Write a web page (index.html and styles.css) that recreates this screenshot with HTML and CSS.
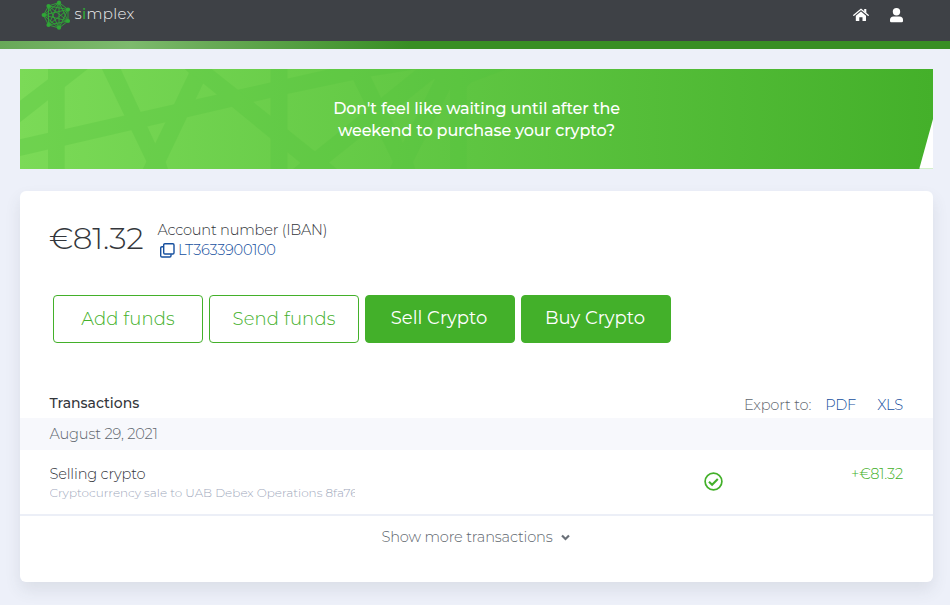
FILE: index.html
```html
<!DOCTYPE html>
<html lang="en">
<head>
  <meta charset="UTF-8">
  <title>Simplex</title>
  <meta name="viewport" content="width=device-width, initial-scale=1.0">
  <link rel="stylesheet" href="styles.css">
</head>
<body>
  <header class="header">
    <a class="logo" href="#">
      <svg class="logo-mark" width="30" height="31" viewBox="0 0 30 31">
        <g fill="none" stroke="#2fa836" stroke-width=".9">
          <path d="M18 2.500L27 9.500L27 21L18 28L7.500 25L2.500 15L7.500 6Z"/>
          <path d="M18 2.500L27 21L7.500 25L7.500 6L27 9.500L18 28L2.500 15Z"/>
          <path d="M18 2.500L18 28L7.500 6L27 21L2.500 15L27 9.500L7.500 25Z"/>
        </g>
        <g fill="#2fa836">
          <circle cx="18" cy="2.700" r="2.100"/><circle cx="27" cy="9.500" r="2.100"/><circle cx="27" cy="21" r="2.100"/>
          <circle cx="18" cy="27.700" r="2.100"/><circle cx="7.500" cy="25" r="2.100"/><circle cx="2.700" cy="15" r="2.100"/><circle cx="7.500" cy="6" r="2.100"/>
        </g>
      </svg>
      <span class="logo-text">s<span class="logo-i">i</span>mplex</span>
    </a>
    <nav class="nav">
      <a href="#" aria-label="Home">
        <svg width="16" height="14" viewBox="0 0 16 14" fill="#fff">
          <path d="M8 3.400L2.800 7.700V12.400Q2.800 13 3.400 13H6.300V9.300H9.500V13H12.400Q13 13 13 12.400V7.700Z"/>
          <path d="M.8 7.300L8 1.300L15.200 7.300" fill="none" stroke="#fff" stroke-width="1.300" stroke-linecap="round"/>
          <path d="M11.200 1H13.300V5.300L11.200 3.500Z"/>
        </svg>
      </a>
      <a href="#" aria-label="Profile">
        <svg width="13" height="15" viewBox="0 0 13 15" fill="#fff">
          <circle cx="6.500" cy="3.800" r="3.700"/>
          <path d="M3.500 8.500H9.500Q13 8.800 13 12V13Q13 14.300 11.700 14.300H1.300Q0 14.300 0 13V12Q0 8.800 3.500 8.500Z"/>
        </svg>
      </a>
    </nav>
  </header>
  <div class="stripe"></div>

  <main class="page">
    <section class="banner">
      <svg class="banner-art" width="913" height="100" viewBox="0 0 913 100">
        <g class="weave">
          <path d="M28 0H44.700V100H28Z"/>
          <path d="M0 31.700L41.500 0H67.700L0 53.300Z"/>
          <path d="M0 70.300L310 0H397L350 7.500L267 25L0 87Z"/>
          <path d="M82 0H100.700L147 100H123L126.700 93Z"/>
          <path d="M165 0H190L145.700 93L148 100H123L169 4Z"/>
          <path d="M165 0H191.700L317 100H288L182.700 14Z"/>
          <path d="M250.500 0H267.500V100H250.500Z"/>
          <path d="M273 100L397 0H426L301 100Z"/>
          <path d="M328 0H347L392 93L395 100H370L373 93Z"/>
          <path d="M420 0H440L393 93L395 100H370Z"/>
          <path d="M430 0H446.700V100H430Z"/>
          <path d="M397 0H487L452 13L446 18L440 24Z"/>
        </g>
        <path d="M913 50V99H899.500Z" fill="#fff"/>
        <path d="M899.500 99H913V100H899.500Z" fill="#d3f0cb"/>
      </svg>
      <p class="banner-text">Don't feel like waiting until after the<br>weekend to purchase your crypto?</p>
    </section>

    <section class="card">
      <div class="account">
        <div class="balance">€81.32</div>
        <div class="iban">
          <div class="iban-label">Account number (IBAN)</div>
          <a class="iban-number" href="#">
            <svg width="15" height="15" viewBox="0 0 15 15" fill="none" stroke="#164f9e" stroke-width="1.400">
              <rect x="3.700" y=".7" width="10.300" height="10.300" rx="1.200"/>
              <path d="M3.500 3.700H2Q.7 3.700 .7 5V12.700Q.7 14 2 14H9.700Q11 14 11 12.700V11.200"/>
            </svg>
            <span>LT3633900100</span>
          </a>
        </div>
      </div>

      <div class="actions">
        <a class="btn btn-outline" href="#">Add funds</a>
        <a class="btn btn-outline" href="#">Send funds</a>
        <a class="btn btn-solid" href="#">Sell Crypto</a>
        <a class="btn btn-solid" href="#">Buy Crypto</a>
      </div>

      <div class="list-head">
        <h2 class="list-title">Transactions</h2>
        <div class="export">
          <span class="export-label">Export to:</span>
          <a class="export-pdf" href="#">PDF</a>
          <a class="export-xls" href="#">XLS</a>
        </div>
      </div>
      <div class="date-row"><span>August 29, 2021</span></div>
      <div class="transaction">
        <div class="details">
          <div class="kind">Selling crypto</div>
          <div class="note">Cryptocurrency sale to UAB Debex Operations 8fa76</div>
        </div>
        <svg class="status" width="19" height="19" viewBox="0 0 19 19" fill="none" stroke="#43b02a">
          <circle cx="9.500" cy="9.500" r="8.400" stroke-width="1.700"/>
          <path d="M5 9.700L8.100 12.700L13.800 6.900" stroke-width="2.100"/>
        </svg>
        <div class="amount">+€81.32</div>
      </div>
      <a class="more" href="#">
        <span>Show more transactions</span>
        <svg width="9" height="7" viewBox="0 0 9 7" fill="none" stroke="#6a7078" stroke-width="2.200">
          <path d="M1 1.500L4.500 5L8 1.500"/>
        </svg>
      </a>
    </section>
  </main>
</body>
</html>
```

FILE: styles.css
```css
* { box-sizing: border-box; }
body { margin: 0; height: 605px; overflow: hidden; background: #edf0f9; color: #33363b; font-family: Montserrat, Inter, sans-serif; font-weight: 300; font-size: 14.6px; letter-spacing: -.18px; }
a { color: inherit; text-decoration: none; }
svg { display: block; flex: none; }

.header { display: flex; justify-content: space-between; height: 41px; padding: 0 47px 0 41px; background: #3e4146; }
.logo { display: flex; color: #f2f2f2; }
.logo-text { margin: 4px 0 0 3.5px; font-size: 15px; line-height: 20px; letter-spacing: .3px; }
.logo-i { color: #2fa836; font-weight: 500; }
.nav { display: flex; gap: 21px; padding-top: 8px; }
.stripe { height: 8px; background: linear-gradient(90deg, #68a858 0, #7dba6d 130px, #68aa56 210px, #388e24 410px); }

.page { padding: 20px 17px 0 20px; }
.banner { position: relative; height: 100px; background: linear-gradient(90deg, #7bda57, #5fc642 48%, #44b02a); }
.banner-art { position: absolute; top: 0; left: 0; }
.weave { fill: #53c33e; opacity: .3; }
.banner-text { position: relative; margin: 0; padding-top: 29px; color: #fff; font-size: 16px; font-weight: 500; line-height: 22px; text-align: center; letter-spacing: -.12px; }

.card { height: 391px; margin-top: 22px; padding-top: 28px; background: #fff; border-radius: 6px; box-shadow: 0 8px 16px rgba(60, 65, 80, .1); }
.account { display: flex; padding-left: 29px; }
.balance { width: 108.5px; font-size: 31px; line-height: 38px; letter-spacing: -.2px; }
.iban { padding-top: 1px; line-height: 20px; }
.iban-label { letter-spacing: -.22px; }
.iban-number { display: flex; align-items: center; gap: 3px; padding-left: 2.5px; color: #164f9e; letter-spacing: -.3px; }

.actions { display: flex; gap: 6px; margin-top: 35px; padding-left: 33px; }
.btn { width: 150px; height: 48px; border: 1px solid #43b02a; border-radius: 4px; font-size: 18px; line-height: 46px; text-align: center; letter-spacing: .15px; }
.btn-outline { color: #43b02a; }
.btn-solid { padding-right: 2px; background: #43b02a; color: #fff; font-weight: 400; line-height: 44px; letter-spacing: 0; }

.list-head { display: flex; justify-content: space-between; height: 75px; padding: 50px 30px 0 29.5px; line-height: 20px; }
.list-title { margin: 0; font-size: 14px; font-weight: 500; line-height: 20px; letter-spacing: 0; }
.export { display: flex; padding-top: 2px; color: #164f9e; }
.export-label { margin-right: 14px; color: #60666e; }
.export-pdf { margin-right: 21px; }
.date-row { height: 32px; padding-left: 29.5px; background: #f7f8fc; color: #60666e; line-height: 32px; }
.transaction { display: flex; height: 66px; padding: 14px 30px 0 29.5px; border-bottom: 2px solid #eceff7; }
.details { width: 305px; overflow: hidden; white-space: nowrap; line-height: 20px; }
.note { color: #a1a9bc; font-size: 12px; line-height: 18px; letter-spacing: 0; }
.status { margin: 8px 0 0 349.5px; }
.amount { margin-left: auto; color: #43b02a; line-height: 20px; letter-spacing: -.2px; }
.more { display: flex; align-items: center; justify-content: center; gap: 9px; height: 42px; padding-right: 1px; color: #60666e; }
```
